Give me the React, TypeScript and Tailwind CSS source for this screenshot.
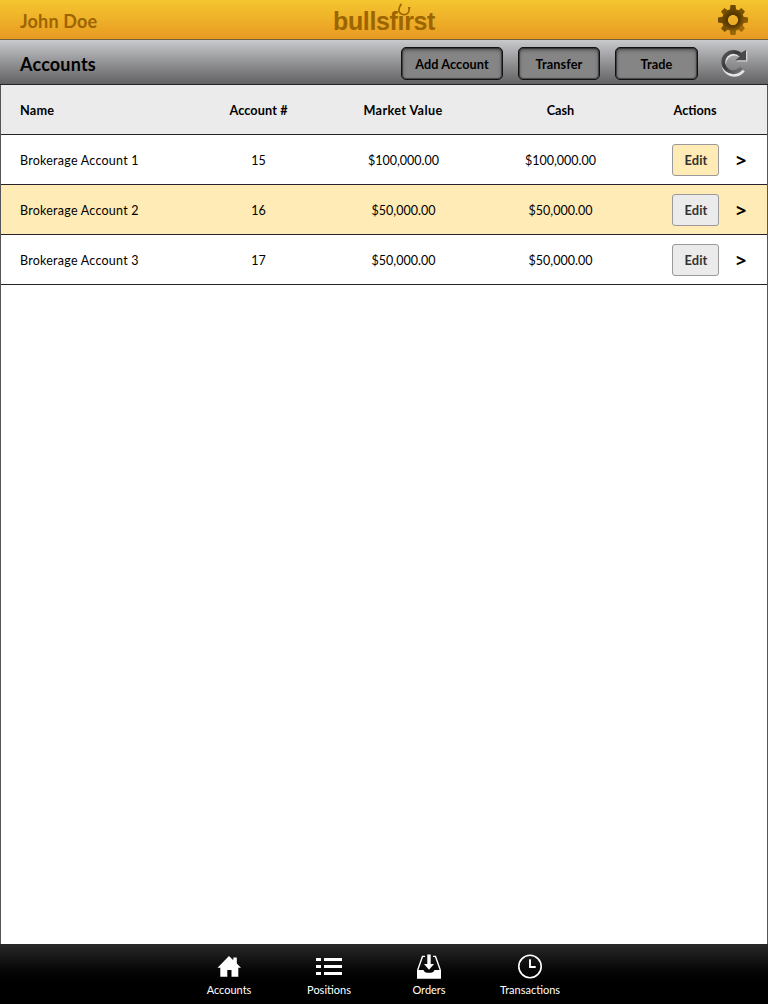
import type { ReactNode } from "react";

type Account = {
  name: string;
  id: number;
  value: string;
  cash: string;
  row: string;
  edit: string;
};

const accounts: Account[] = [
  { name: "Brokerage Account 1", id: 15, value: "$100,000.00", cash: "$100,000.00", row: "bg-white", edit: "bg-[#ffebb5]" },
  { name: "Brokerage Account 2", id: 16, value: "$50,000.00", cash: "$50,000.00", row: "bg-[#ffebb5]", edit: "bg-[#ebebeb]" },
  { name: "Brokerage Account 3", id: 17, value: "$50,000.00", cash: "$50,000.00", row: "bg-white", edit: "bg-[#ebebeb]" },
];

const columns = "grid grid-cols-[185px_145px_145px_169px_123px] items-center";

function Logo() {
  return (
    <div className="relative h-[39px] w-[104px] pl-px font-['Liberation_Sans',sans-serif] text-[25px] leading-[43px] font-bold tracking-[-0.35px] text-[#9c6500]">
      bullsfırst
      <svg className="absolute top-[3px] left-[65px]" width="16" height="14" viewBox="0 0 16 14" fill="none" stroke="#9c6500" strokeWidth="1.6">
        <path d="M3.8 1.8C2 4.6 1.2 8.4 3.4 10.4C5.8 12.4 9.8 12 11.2 9.6C12.2 8 12.3 6.6 12.2 4.8M2.8 1.6H4.8M11 4.8H13.4" />
      </svg>
    </div>
  );
}

function Gear() {
  const diagonals = [45, 135, 225, 315];
  return (
    <svg width="30" height="30" viewBox="-15 -15 30 30">
      <defs>
        <linearGradient id="gear" gradientUnits="userSpaceOnUse" x1="-8" y1="-14" x2="8" y2="14">
          <stop offset="0" stopColor="#6b4700" />
          <stop offset="0.45" stopColor="#704b00" />
          <stop offset="1" stopColor="#a56f08" />
        </linearGradient>
        <radialGradient id="hub" gradientUnits="userSpaceOnUse" cx="0" cy="0" r="11">
          <stop offset="0.45" stopColor="#4a3000" stopOpacity="0.9" />
          <stop offset="1" stopColor="#4a3000" stopOpacity="0" />
        </radialGradient>
      </defs>
      <g fill="url(#gear)">
        <path fillRule="evenodd" d="M-11 0A11 11 0 1 1 11 0A11 11 0 1 1-11 0ZM-5.2 0A5.2 5.2 0 1 0 5.2 0A5.2 5.2 0 1 0-5.2 0Z" />
        <path d="M-3.2-10L-2.5-15H2.5L3.2-10ZM-3.2 10L-2.5 15H2.5L3.2 10ZM-10-3.2L-15-2.5V2.5L-10 3.2ZM10-3.2L15-2.5V2.5L10 3.2Z" />
      </g>
      {diagonals.map((a) => (
        <path key={a} d="M-3.2-10L-2.5-14.4H2.5L3.2-10Z" transform={`rotate(${a})`} fill={a === 135 ? "#a06b06" : "#7a5200"} />
      ))}
      <path fill="url(#hub)" fillRule="evenodd" d="M-11 0A11 11 0 1 1 11 0A11 11 0 1 1-11 0ZM-5.2 0A5.2 5.2 0 1 0 5.2 0A5.2 5.2 0 1 0-5.2 0Z" />
    </svg>
  );
}

function Refresh() {
  return (
    <svg width="30" height="30" viewBox="0 0 30 30" fill="none">
      <defs>
        <linearGradient id="reload" x1="0" y1="0" x2="1" y2="1">
          <stop offset="0" stopColor="#5a5a5a" />
          <stop offset="0.4" stopColor="#383838" />
          <stop offset="1" stopColor="#777" />
        </linearGradient>
        <filter id="soft" x="-20%" y="-20%" width="140%" height="140%">
          <feGaussianBlur stdDeviation="0.7" />
        </filter>
        <filter id="edge" x="-20%" y="-20%" width="140%" height="140%">
          <feGaussianBlur stdDeviation="0.4" />
        </filter>
      </defs>
      <g filter="url(#soft)" stroke="#e4e4e4" fill="#d5d5d5">
        <path d="M23.3 21.3A10.6 10.6 0 1 1 22.5 8.3" fill="none" strokeWidth="4" transform="translate(.8 1.8)" />
        <path d="M28 3V14H17Z" stroke="none" transform="translate(.4 .6)" />
      </g>
      <g filter="url(#edge)">
        <path d="M22.6 21.2A10.2 10.2 0 1 1 21.8 8" stroke="url(#reload)" strokeWidth="3.8" />
        <path d="M27 3V13.3H16.5L20.5 9.5L18.6 7.7L22.6 5.6Z" fill="#484848" />
      </g>
    </svg>
  );
}

function BarButton({ children, width }: { children: ReactNode; width: string }) {
  return (
    <button className={`${width} h-[33px] rounded-[5px] border border-[#111] bg-[#858585] pt-px text-[12.7px] leading-[30px] font-bold tracking-[0.1px] text-black shadow-[inset_0_0_1px_1px_rgba(0,0,0,0.45),inset_0_2px_4px_rgba(0,0,0,0.4)]`}>
      {children}
    </button>
  );
}

function Tab({ label, width = "w-[100px]", children }: { label: string; width?: string; children: ReactNode }) {
  return (
    <div className={`${width} flex flex-col items-center pt-[8px] text-white`}>
      {children}
      <span className="mt-[1px] text-[11px] leading-[16px]">{label}</span>
    </div>
  );
}

export default function App() {
  return (
    <div className="flex h-[1004px] w-[768px] flex-col bg-white font-['Lato','Noto_Sans',sans-serif] text-black">
      <header className="grid h-[40px] grid-cols-[1fr_104px_1fr] border-b border-[#73603a] bg-linear-to-b from-[#f4c62f] to-[#e89a22]">
        <div className="pl-[20px] text-[18px] leading-[42px] font-bold tracking-[0.15px] text-[#9c6500]">John Doe</div>
        <Logo />
        <div className="flex items-start justify-end pt-[5px] pr-[20px]"><Gear /></div>
      </header>

      <section className="flex h-[45px] items-center border-b border-[#272228] bg-linear-to-b from-[#c9cacd] to-[#626264] pl-[20px]">
        <h1 className="flex-1 pt-[3px] text-[18px] leading-[24px] font-bold tracking-[0.18px]">Accounts</h1>
        <div className="flex items-center pt-[2px]">
          <BarButton width="w-[102px]">Add Account</BarButton>
          <div className="ml-[15px] flex gap-[15px]">
            <BarButton width="w-[82px]">Transfer</BarButton>
            <BarButton width="w-[83px]">Trade</BarButton>
          </div>
        </div>
        <div className="mr-[19px] ml-[21px]"><Refresh /></div>
      </section>

      <main className="flex-1 border-x border-[#555]">
        <div className={`${columns} h-[50px] border-b border-[#272228] bg-[#ebebeb] pt-[3px] text-center text-[12.7px] font-bold`}>
          <span className="pl-[19px] text-left tracking-[0.2px]">Name</span>
          <span className="tracking-[0.1px]">Account #</span>
          <span className="pr-px tracking-[0.36px]">Market Value</span>
          <span>Cash</span>
          <span className="pr-[23px]">Actions</span>
        </div>
        {accounts.map((a) => (
          <div key={a.id} className={`${columns} ${a.row} h-[50px] border-b border-[#272228] text-center text-[12.5px]`}>
            <span className="pt-[3px] pl-[19px] text-left tracking-[0.24px]">{a.name}</span>
            <span className="pt-[3px]">{a.id}</span>
            <span className="pt-[3px]">{a.value}</span>
            <span className="pt-[3px]">{a.cash}</span>
            <span className="flex items-center pl-[27px]">
              <button className={`${a.edit} h-[32px] w-[47px] rounded-[3px] border border-[#999] pt-[3px] pl-px text-[12.9px] font-bold tracking-[0.1px] text-[#333]`}>Edit</button>
              <span className="ml-[17px] pt-px font-['Noto_Sans',sans-serif] text-[18px] leading-[20px] font-bold">&gt;</span>
            </span>
          </div>
        ))}
      </main>

      <footer className="flex h-[60px] bg-linear-to-b from-[#292929] to-black to-80% pl-[179px]">
        <Tab label="Accounts">
          <svg width="28" height="29" viewBox="0 0 28 29" fill="white">
            <path d="M14 4L18.3 8.2V5.4H21.8V11.6L26 15.8H23.3V24.8H16.5V18.1H12.3V24.8H5.3V15.8H2.5Z" />
          </svg>
        </Tab>
        <Tab label="Positions">
          <svg width="28" height="29" viewBox="0 0 28 29" fill="white" shapeRendering="crispEdges">
            <path d="M1 6H6V9H1ZM9 6H27V9H9ZM1 13H6V16H1ZM9 13H27V16H9ZM1 20H6V23H1ZM9 20H27V23H9Z" />
          </svg>
        </Tab>
        <Tab label="Orders">
          <svg width="28" height="29" viewBox="0 0 28 29" fill="white">
            <path d="M2 18H8.5C9 21.8 19 21.8 19.5 18H26V26.7H2Z" />
            <path d="M12.3 2.5H15.7V12H19L14 17.8L9 12H12.3Z" />
            <path d="M10 4.4H7.5L2.7 18M18 4.4H20.5L25.3 18" fill="none" stroke="white" strokeWidth="1.4" />
          </svg>
        </Tab>
        <Tab label="Transactions" width="w-[102px]">
          <svg width="28" height="29" viewBox="0 0 28 29" fill="none" stroke="white">
            <circle cx="14" cy="14.5" r="11.2" strokeWidth="1.6" />
            <path d="M14 7.2V15H19.7" strokeWidth="1.9" />
          </svg>
        </Tab>
      </footer>
    </div>
  );
}
